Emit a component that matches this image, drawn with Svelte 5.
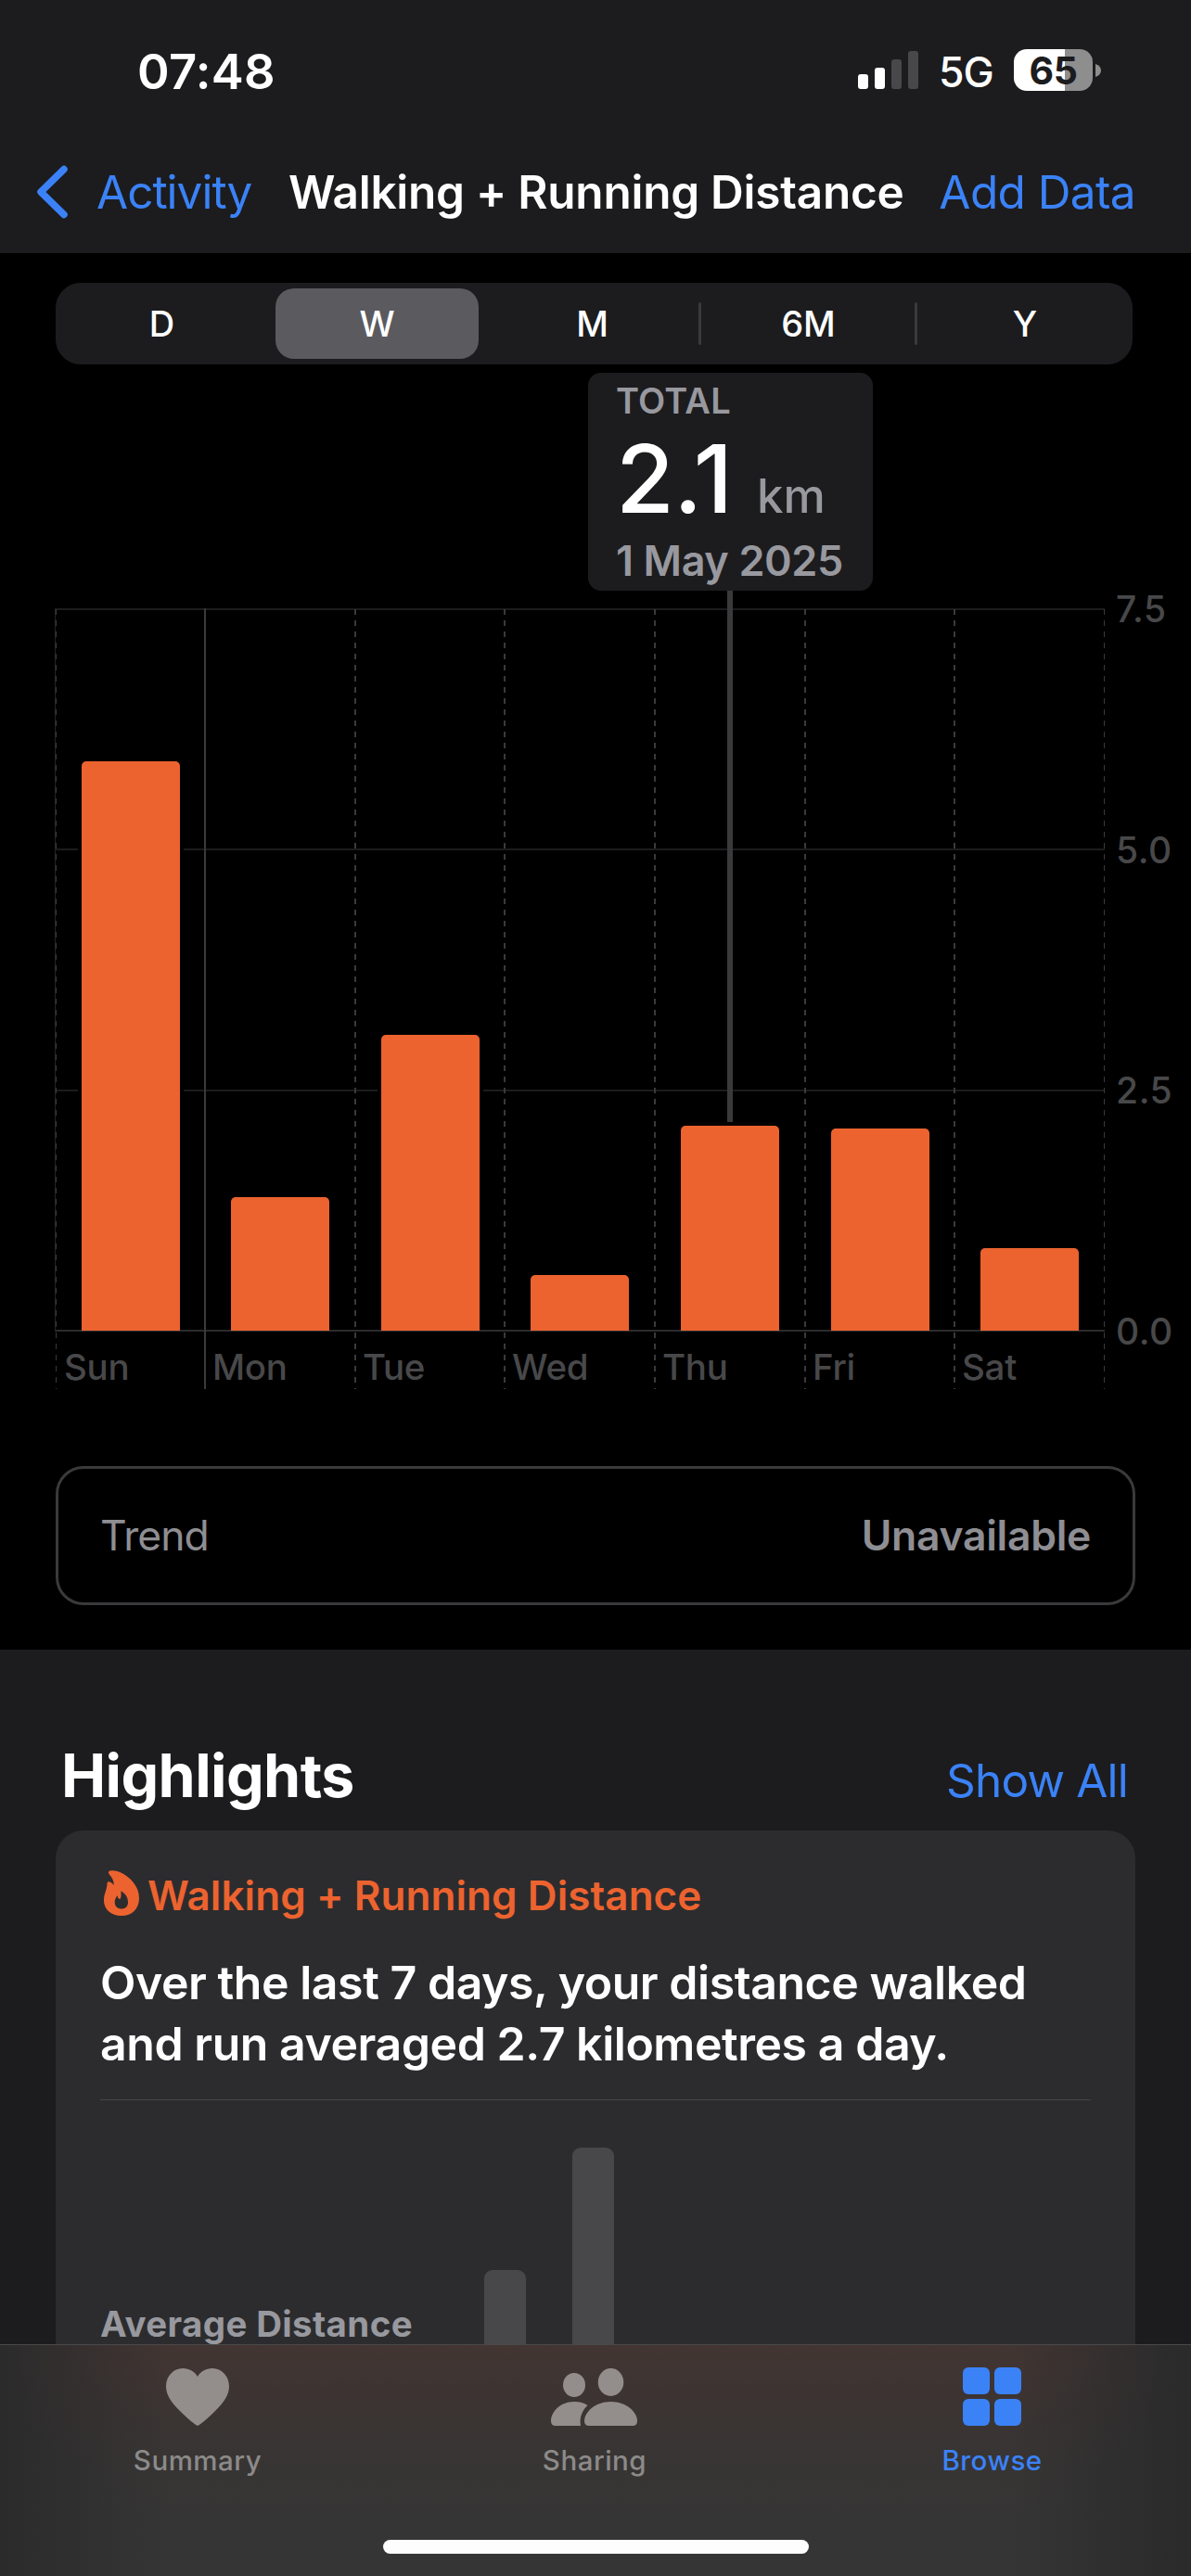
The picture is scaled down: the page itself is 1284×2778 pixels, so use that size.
<script>
  const ranges = ['D', 'W', 'M', '6M', 'Y'];
  const selected = 'W';
  const max = 7.5;
  const days = [
    { name: 'Sun', km: 5.911 },
    { name: 'Mon', km: 1.386 },
    { name: 'Tue', km: 3.071 },
    { name: 'Wed', km: 0.578 },
    { name: 'Thu', km: 2.128 },
    { name: 'Fri', km: 2.099 },
    { name: 'Sat', km: 0.857 },
  ];
  const ticks = ['7.5', '5.0', '2.5', '0.0'];
</script>

<div class="screen">
  <header>
    <div class="status">
      <span class="time">07:48</span>
      <div class="indicators">
        <svg class="signal" width="66" height="42" viewBox="0 0 66 42">
          <rect x="0" y="25" width="11" height="16" rx="3" fill="#fff" />
          <rect x="18" y="18" width="11" height="23" rx="3" fill="#fff" />
          <rect x="36" y="9" width="11" height="32" rx="3" fill="#48484a" />
          <rect x="54" y="0" width="11" height="41" rx="3" fill="#48484a" />
        </svg>
        <span class="net">5G</span>
        <div class="battery">65</div>
        <svg class="nub" width="6" height="14" viewBox="0 0 6 14"><path d="M0 0Q6 2 6 7T0 14Z" fill="#8e8e8f" /></svg>
      </div>
    </div>
    <nav>
      <svg class="chevron" width="36" height="60" viewBox="0 0 36 60">
        <path d="M31 5.5L6 30L31 54.5" fill="none" stroke="#3b82f7" stroke-width="7.5" stroke-linecap="round" stroke-linejoin="round" />
      </svg>
      <span class="back">Activity</span>
      <h1>Walking + Running Distance</h1>
      <span class="add">Add Data</span>
    </nav>
  </header>

  <section class="main">
    <div class="segmented">
      {#each ranges as r}
        <div class="seg" class:active={r === selected}><span>{r}</span></div>
      {/each}
    </div>

    <div class="chart">
      <div class="plot">
        <div class="rules">
          <i></i><i></i><i></i><i></i>
        </div>
        <div class="days">
          {#each days as d}
            <div class="day" class:solid={d.name === 'Mon'}>
              <div class="track">
                <div class="bar" style="height: {(d.km / max) * 100}%"></div>
              </div>
              <span class="label">{d.name}</span>
            </div>
          {/each}
        </div>
        <div class="stem"></div>
        <div class="callout">
          <span class="total">TOTAL</span>
          <span class="value"><b>2.1</b><em>km</em></span>
          <span class="date">1 May 2025</span>
        </div>
      </div>
      <div class="scale">
        {#each ticks as t}<span>{t}</span>{/each}
      </div>
    </div>

    <div class="trend">
      <span class="tname">Trend</span>
      <span class="tval">Unavailable</span>
    </div>
  </section>

  <section class="highlights">
    <div class="head">
      <h2>Highlights</h2>
      <span class="all">Show All</span>
    </div>
    <article>
      <div class="kind">
        <svg width="38" height="49" viewBox="0 0 38 49">
          <path fill="#ec632f" fill-rule="evenodd" d="M6.500 0.400C11 -0.500 17 1.200 21.300 4C31 10 38 19 38 30C38 42 30 49 19 49C7.500 49 0 42 0 32.500C0 25 3.300 21.500 3.500 14.500C3.500 12.300 5.200 11.800 7 12.800C8.600 13.700 10 15 10.700 16.200C10.800 12.500 9.800 10 8.200 7.500C7 5.700 5.800 4.800 5.200 3.300C4.700 2 5.200 0.700 6.500 0.400ZM18.300 22.300C24 25.500 26 30 26 34.500C26 39 23 41.500 18.800 41.500C14.500 41.500 11.700 38.500 11.700 34.500C11.700 31 13 29.500 14.500 27C15 29.500 16 31 17.300 31.200C19 29 18.600 25.500 18.300 22.300Z" />
        </svg>
        <span>Walking + Running Distance</span>
      </div>
      <p>Over the last 7 days, your distance walked<br />and run averaged 2.7 kilometres a day.</p>
      <hr />
      <div class="mini">
        <span>Average Distance</span>
        <div class="minibar short"></div>
        <div class="minibar"></div>
      </div>
    </article>
  </section>

  <footer>
    <div class="tabs">
      <div class="tab">
        <svg width="68" height="63" viewBox="0 0 68 63">
          <path fill="#938e8b" d="M34 63C32.500 63 22 54 15 47C6 38 0 30 0 20.500C0 9.500 8 1 18 1C25 1 31 4.500 34 10C37 4.500 43 1 50 1C60 1 68 9.500 68 20.500C68 30 62 38 53 47C46 54 35.500 63 34 63Z" />
        </svg>
        <span class="summary">Summary</span>
      </div>
      <div class="tab">
        <svg width="94" height="63" viewBox="0 -1 94 63">
          <g fill="#938e8b">
            <ellipse cx="25" cy="18" rx="12" ry="13" />
            <ellipse cx="64.500" cy="15" rx="13.800" ry="15" />
            <path d="M5 62Q0 62 0 57C0 47 10 36 25 36C31 36 36 37.500 39.500 40C33 46 30.500 54 32 62Z" />
            <path d="M41 62Q36 62 36 57C36 47 48 36 64.500 36C81 36 93 47 93 57Q93 62 88 62Z" />
          </g>
        </svg>
        <span class="sharing">Sharing</span>
      </div>
      <div class="tab on">
        <svg width="64" height="63" viewBox="0 0 64 63">
          <g fill="#3b82f7">
            <rect x="0" y="0" width="29" height="29" rx="6" />
            <rect x="34" y="0" width="29" height="29" rx="6" />
            <rect x="0" y="34" width="29" height="29" rx="6" />
            <rect x="34" y="34" width="29" height="29" rx="6" />
          </g>
        </svg>
        <span class="browse">Browse</span>
      </div>
    </div>
    <div class="home"></div>
  </footer>
</div>

<style>
  :global(body) {
    background: #1c1c1e;
  }
  .screen {
    width: 1284px;
    height: 2778px;
    overflow: hidden;
    display: flex;
    flex-direction: column;
    background: #1c1c1e;
    color: #fff;
    font-family: Inter, 'Liberation Sans', sans-serif;
    white-space: nowrap;
    box-sizing: border-box;
  }
  .screen * {
    box-sizing: border-box;
  }
  header {
    height: 273px;
    flex: none;
  }
  .status {
    height: 145px;
    padding: 53px 97px 0 148px;
    display: flex;
    justify-content: space-between;
    align-items: flex-start;
  }
  .time {
    font-size: 52.5px;
    line-height: 48px;
    font-weight: 600;
    letter-spacing: 0.3px;
  }
  .indicators {
    display: flex;
    align-items: flex-start;
  }
  .signal {
    margin-top: 2px;
  }
  .net {
    margin-left: 21px;
    width: 81px;
    font-size: 44.5px;
    line-height: 51px;
    font-weight: 500;
    letter-spacing: -1px;
  }
  .battery {
    width: 85px;
    height: 45px;
    border-radius: 14px;
    background: linear-gradient(90deg, #fff 55px, #8e8e8f 55px);
    color: #1c1c1e;
    font-size: 41px;
    line-height: 46px;
    font-weight: 700;
    letter-spacing: -0.3px;
    text-align: center;
  }
  .nub {
    margin: 16px 0 0 3px;
  }
  nav {
    display: flex;
    align-items: center;
    height: 124px;
    padding: 0 60px 0 38px;
    font-size: 49.5px;
  }
  .back {
    margin-left: 30px;
    width: 207px;
    color: #3b82f7;
    letter-spacing: -1px;
  }
  h1 {
    margin: 0;
    flex: 1;
    font-size: 49.5px;
    font-weight: 600;
    letter-spacing: -0.25px;
  }
  .add {
    color: #3b82f7;
    letter-spacing: -0.6px;
  }

  .main {
    flex: none;
    height: 1506px;
    background: #000;
    padding: 32px 0 0 60px;
  }
  .segmented {
    width: 1161px;
    height: 88px;
    border-radius: 27px;
    background: #1c1c1e;
    display: grid;
    grid-template-columns: 229px 232px 233px 233px 1fr;
    font-size: 38px;
    font-weight: 500;
  }
  .seg {
    display: flex;
    align-items: center;
    justify-content: center;
    position: relative;
  }
  .seg:nth-child(n + 3) {
    padding-left: 2px;
  }
  .seg:nth-child(n + 4)::before {
    content: '';
    position: absolute;
    left: -1px;
    top: 21px;
    width: 3px;
    height: 46px;
    border-radius: 2px;
    background: #3a3a3c;
  }
  .active {
    margin: 6px 5px 6px 8px;
    border-radius: 20px;
    background: #5b5a5f;
  }
  .chart {
    display: flex;
    margin-top: 263px;
    height: 842px;
  }
  .plot {
    position: relative;
    width: 1132px;
    height: 842px;
    border-left: 1px solid #242426;
    margin-left: -1px;
    border-image: linear-gradient(#242426 779px, transparent 779px) 1;
  }
  .rules {
    position: absolute;
    inset: 0 0 auto 0;
    height: 780px;
    display: flex;
    flex-direction: column;
    justify-content: space-between;
  }
  .rules i {
    height: 2px;
    background: #1c1c1e;
  }
  .rules i:last-child {
    background: #2c2c2e;
  }
  .days {
    position: relative;
    height: 100%;
    display: grid;
    grid-template-columns: 161px 162px 161px 162px 162px 161px 1fr;
    background: repeating-linear-gradient(#3a3a3c 0 6px, transparent 6px 12px) right 1px / 1px 100% no-repeat;
  }
  .day {
    background: repeating-linear-gradient(#3a3a3c 0 6px, transparent 6px 12px) left 1px / 2px 100% no-repeat;
    display: flex;
    flex-direction: column;
    margin-left: -1px;
  }
  .day:first-child {
    margin-left: 0;
    background-size: 1px 100%;
  }
  .day:first-child .track {
    margin-left: 28px;
  }
  .solid {
    background: linear-gradient(#3a3a3c, #3a3a3c) left / 2px 100% no-repeat;
  }
  .track {
    width: 106px;
    height: 779px;
    margin-left: 29px;
    display: flex;
    align-items: flex-end;
  }
  .bar {
    width: 100%;
    border-radius: 5px 5px 0 0;
    background: #ec632f;
    box-shadow: -4px -4px 0 #000, 4px -4px 0 #000;
    clip-path: inset(-5px -5px 0 -5px);
  }
  .label {
    margin: 15px 0 0 9px;
    font-size: 38.5px;
    line-height: 48px;
    font-weight: 500;
    letter-spacing: -0.3px;
    color: #48484a;
  }
  .stem {
    position: absolute;
    left: 724px;
    top: -20px;
    width: 6px;
    height: 574px;
    background: #3a3a3c;
  }
  .callout {
    position: absolute;
    left: 574px;
    top: -254px;
    width: 307px;
    height: 235px;
    border-radius: 14px;
    background: #1c1c1e;
    padding-left: 30px;
    display: flex;
    flex-direction: column;
    color: #98989f;
    font-weight: 600;
  }
  .total {
    margin-top: 6px;
    font-size: 38px;
    line-height: 48px;
    letter-spacing: 0.2px;
  }
  .value {
    display: flex;
    align-items: baseline;
    height: 112px;
    line-height: 120px;
  }
  .value b {
    font-size: 102px;
    font-weight: 500;
    color: #fff;
    letter-spacing: -0.5px;
    width: 152px;
  }
  .value em {
    font-style: normal;
    font-size: 51px;
    font-weight: 500;
  }
  .date {
    font-size: 45px;
    line-height: 54px;
    margin-top: 10px;
    letter-spacing: -0.4px;
  }
  .scale {
    margin: -23px 0 0 12px;
    height: 827px;
    display: flex;
    flex-direction: column;
    justify-content: space-between;
    font-size: 39px;
    line-height: 48px;
    font-weight: 500;
    letter-spacing: 0.6px;
    color: #48484a;
  }
  .trend {
    margin-top: 83px;
    width: 1164px;
    height: 150px;
    border: 3px solid #3a3a3c;
    border-radius: 30px;
    padding: 0 45px;
    display: flex;
    align-items: center;
    justify-content: space-between;
    font-size: 44.5px;
    color: #8e8e93;
    letter-spacing: -1px;
  }
  .tval {
    font-weight: 600;
    letter-spacing: -0.3px;
  }

  .highlights {
    flex: none;
    height: 749px;
    overflow: hidden;
    padding: 96px 60px 0;
  }
  .head {
    display: flex;
    align-items: baseline;
    justify-content: space-between;
    height: 99px;
    padding: 0 8px 0 6px;
  }
  h2 {
    margin: 0;
    font-size: 64.5px;
    line-height: 80px;
    font-weight: 700;
    letter-spacing: -0.6px;
  }
  .all {
    font-size: 49.5px;
    color: #3b82f7;
    letter-spacing: -0.8px;
  }
  article {
    height: 700px;
    border-radius: 30px;
    background: #2c2c2e;
    padding: 38px 48px 0;
  }
  .kind {
    display: flex;
    align-items: center;
    height: 60px;
    padding-left: 4px;
    font-size: 44px;
    font-weight: 600;
    color: #ec632f;
    letter-spacing: 0.07px;
  }
  .kind svg {
    margin: 0 9px 2px 0;
  }
  .kind span {
    padding-top: 4px;
  }
  p {
    margin: 33px 0 0;
    font-size: 50px;
    line-height: 66px;
    font-weight: 600;
    letter-spacing: -0.46px;
  }
  hr {
    margin: 27px 0 0;
    border: 0;
    height: 1px;
    background: #464648;
  }
  .mini {
    display: flex;
    margin-top: 51px;
    height: 300px;
  }
  .mini span {
    width: 414px;
    padding: 166px 0 0;
    font-size: 38.5px;
    line-height: 48px;
    font-weight: 700;
    letter-spacing: 0.35px;
    color: #98989f;
  }
  .minibar {
    width: 45px;
    border-radius: 9px 9px 0 0;
    background: #48484a;
    margin-left: 50px;
  }
  .short {
    margin: 132px 0 0 0;
  }

  footer {
    height: 250px;
    border-top: 1px solid #4a4a4c;
    background:
      linear-gradient(90deg, #2b2b2c 0, #2b2b2c00 180px, #2b2b2c00 1090px, #2b2b2c 1270px),
      linear-gradient(#423532 0, #3b3432 70px, #373534 130px, #353536 250px);
  }
  .tabs {
    display: grid;
    grid-template-columns: repeat(3, 1fr);
    height: 210px;
    padding-top: 24px;
  }
  .tab {
    display: flex;
    flex-direction: column;
    align-items: center;
    gap: 17px;
    padding-right: 2px;
    font-size: 29.5px;
    line-height: 40px;
    font-weight: 500;
    letter-spacing: 0.5px;
    color: #8c8a89;
  }
  .on {
    color: #3b82f7;
    padding-right: 1px;
  }
  .home {
    width: 459px;
    height: 15px;
    margin: 0 auto;
    border-radius: 8px;
    background: #fdfdfd;
  }
</style>
